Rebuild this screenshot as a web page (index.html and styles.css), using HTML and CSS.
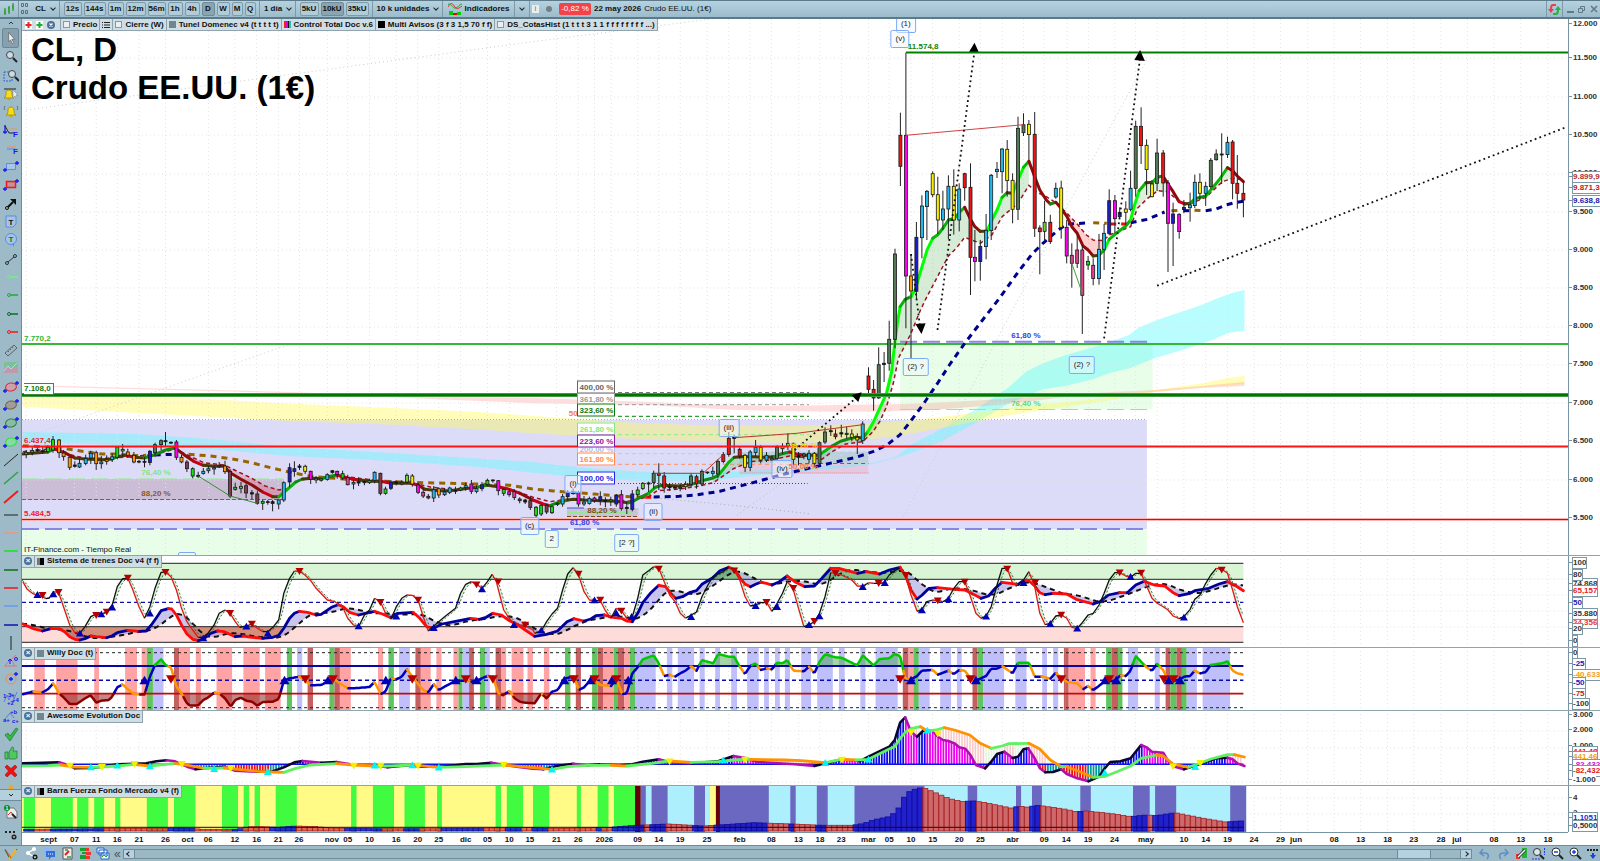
FILE: index.html
```html
<!DOCTYPE html>
<html lang="es">
<head>
<meta charset="utf-8">
<title>CL, D - Crudo EE.UU. (1€)</title>
<link rel="stylesheet" href="styles.css">
</head>
<body>
<div class="app">
  <header class="topbar">
    <span class="cell logo"><svg width="12" height="14" viewBox="0 0 12 14"><path d="M2 6v7M6 4v8M10 1v8" stroke="#1f7a1f" stroke-width="1"/><path d="M1 8h2v4H1zM5 5h2v5H5zM9 3h2v4H9z" fill="#35a835"/></svg></span>
    <span class="cell grip"><svg width="8" height="14" viewBox="0 0 8 14" fill="none" stroke="#5f6f79"><path d="M.5 1.500h2v3h-2zM4.500 1.500h2v3h-2zM.5 8.500h2v3h-2zM4.500 8.500h2v3h-2z"/></svg></span>
    <button class="cell plain symbol">CL <i class="chev"></i></button>
    <div class="cell group frames">
      <button class="w18">12s</button><button class="w22">144s</button><button class="w16">1m</button><button class="w21">12m</button><button class="w18">56m</button><button class="w14">1h</button><button class="w14">4h</button><button class="w13 on">D</button><button class="w13">W</button><button class="w11">M</button><button class="w11">Q</button>
    </div>
    <button class="cell plain day">1 día <i class="chev"></i></button>
    <div class="cell group units"><button class="w20">5kU</button><button class="w24 on">10kU</button><button class="w24">35kU</button></div>
    <button class="cell plain unit-select">10 k unidades <i class="chev"></i></button>
    <button class="cell plain indic"><svg width="14" height="14" viewBox="0 0 14 14" fill="none"><path d="M0 5c3-6 5-3 7 0s4 1 7-1" stroke="#d33"/><path d="M0 2c4 0 5 5 8 4s3-4 6-4" stroke="#2a2"/><path d="M1 9h4v4H1zM9 10h4v3H9z" fill="#00d000"/><path d="M5 11h4v2H5z" fill="#e00"/></svg> Indicadores</button>
    <button class="cell plain more" aria-label="Más indicadores"><i class="chev"></i></button>
    <div class="status"><span class="info">i</span><span class="dot"></span><span class="change">-0,82 %</span><b>22 may 2026</b><span>Crudo EE.UU. (1€)</span></div>
    <button class="cell plain refresh" aria-label="Actualizar"><svg width="13" height="13" viewBox="0 0 13 13" fill="none" stroke-width="2"><path d="M8 2H5C3 2 3 4 3 7" stroke="#e8414d"/><path d="M0 6h6L3 10z" fill="#e8414d"/><path d="M5 11h3c2 0 2-2 2-4" stroke="#25b23d"/><path d="M7 7h6L10 3z" fill="#25b23d"/></svg></button>
    <div class="window-buttons"><svg width="32" height="10" viewBox="0 0 32 10" fill="none" stroke="#627985"><path d="M1 8h7" stroke-width="2"/><path d="M12.500 4.500h4v4h-4zM14.500 4V2.500h4v4H17"/><path d="M25 2l6 6M31 2l-6 6" stroke-width="1.500"/></svg></div>
  </header>
  <nav class="tools" id="tools" aria-label="Herramientas"></nav>
  <main class="charts">
    <section class="panel price">
      <div class="plot"><svg id="price"></svg><div class="labels" id="price-labels"></div>
        <div class="tags">
          <span class="tag icons"><svg width="34" height="10" viewBox="0 0 34 10"><rect x="1" y="1" width="7" height="8" fill="#fff"/><path d="M4.500 2v6M1.500 5h6" stroke="#e22" stroke-width="2"/><rect x="12" y="1" width="7" height="8" fill="#fff"/><path d="M15.500 2v6M12.500 5h6" stroke="#1fae2c" stroke-width="2"/><circle cx="27" cy="5" r="4" fill="#4a7199"/><path d="M25.500 3.500l3 3m0-3l-3 3" stroke="#fff" stroke-width="1.300"/></svg></span>
          <span class="tag"><i class="sw"></i>Precio</span>
          <span class="tag"><svg width="8" height="8" viewBox="0 0 8 8"><path d="M0 1.500h1M2 1.500h6M0 4h1M2 4h6M0 6.500h1M2 6.500h6" stroke="#222"/></svg></span>
          <span class="tag"><i class="sw"></i>Cierre (W)</span>
          <span class="tag"><i class="sw slate"></i>Tunel Domenec v4 (t t t t t)</span>
          <span class="tag tight"><i class="sw rainbow"></i>Control Total Doc v.6</span>
          <span class="tag"><i class="sw black"></i>Multi Avisos (3 f 3 1,5 70 f f)</span>
          <span class="tag"><i class="sw"></i>DS_CotasHist (1 t t t 3 1 1 f f f f f f f f ...)</span>
        </div>
        <h1>CL, D<br>Crudo EE.UU. (1€)</h1>
        <p class="credit">IT-Finance.com - Tiempo Real</p>
      </div>
      <div class="axis" id="price-axis"></div>
    </section>
    <section class="panel trains">
      <div class="plot"><svg id="trains"></svg><div class="head"><button aria-label="Cerrar"></button><h2><i class="sw half"></i>Sistema de trenes Doc v4 (f f)</h2></div></div>
      <div class="axis" id="trains-axis"></div>
    </section>
    <section class="panel willy">
      <div class="plot"><svg id="willy"></svg><div class="head"><button aria-label="Cerrar"></button><h2><i class="sw slate"></i>Willy Doc (t)</h2></div></div>
      <div class="axis" id="willy-axis"></div>
    </section>
    <section class="panel awesome">
      <div class="plot"><svg id="awesome"></svg><div class="head"><button aria-label="Cerrar"></button><h2><i class="sw slate"></i>Awesome Evolution Doc</h2></div></div>
      <div class="axis" id="awesome-axis"></div>
    </section>
    <section class="panel force">
      <div class="plot"><svg id="force"></svg><div class="head"><button aria-label="Cerrar"></button><h2><i class="sw half"></i>Barra Fuerza Fondo Mercado v4 (f)</h2></div></div>
      <div class="axis" id="force-axis"></div>
    </section>
    <div class="time" id="time"></div>
  </main>
  <footer class="bottombar">
    <button class="pencil" aria-label="Dibujar"><svg width="14" height="14" viewBox="0 0 14 14" fill="none"><path d="M1 3l5 9L13 2" stroke="#2a6f32"/><path d="M5 12L12 3" stroke="#f0b429" stroke-width="2.500"/><path d="M1 2l6 9" stroke="#d63a3a"/></svg></button>
    <div class="actions">
      <button aria-label="Compartir"><svg width="13" height="13" viewBox="0 0 13 13"><path d="M9 2L3 6l6 4" fill="none" stroke="#fff" stroke-width="1.500"/><circle cx="3" cy="6" r="2" fill="#fff"/><circle cx="9" cy="2" r="2" fill="#fff"/><circle cx="10" cy="10" r="2.500" fill="#111"/><path d="M8.500 9.500h3L10 11.500z" fill="#fff"/></svg></button>
      <button aria-label="Comentarios"><svg width="13" height="13" viewBox="0 0 13 13"><path d="M1 1h8v6H1z" fill="#8fb4f5"/><path d="M3 4h9v6H8l-2 3v-3H3z" fill="#2f6fdc"/><path d="M5 7h1m1 0h1m1 0h1" stroke="#fff"/></svg></button>
      <button aria-label="Informe"><svg width="13" height="13" viewBox="0 0 13 13"><path d="M2 1h9v11H2z" fill="#eee" stroke="#555"/><path d="M4 8l4-4" stroke="#d22" stroke-width="2" fill="none"/><path d="M4 3h3M6 10h4" stroke="#2a2" stroke-width="1.500"/></svg></button>
      <button aria-label="Libro de órdenes"><svg width="13" height="13" viewBox="0 0 13 13"><path d="M1 1h6v3H1zM1 8h6v4H1zM3 5h4v2H3z" fill="#17a22b"/><path d="M7 1h3v3H7zM7 5h5v3H7zM7 9h4v3H7z" fill="#e33"/></svg></button>
      <button aria-label="Ventanas"><svg width="14" height="13" viewBox="0 0 14 13" fill="#fff" stroke="#2166c7"><path d="M1 1h7v5H1zM3 3h8v5H3zM5 6h8v6H5z"/><path d="M6 10l2-2 2 2 2-2" stroke="#2a2" fill="none"/></svg></button>
      <span class="collapse">«</span>
    </div>
    <div class="scroll"><button aria-label="Anterior"><i class="arrow left"></i></button><span class="track"><span class="thumb"></span></span><button aria-label="Siguiente"><i class="arrow right"></i></button></div>
    <div class="actions right">
      <button aria-label="Deshacer"><svg width="12" height="12" viewBox="0 0 12 12"><path d="M4 1L1 5l4 3M1 5h5c4 0 4 4 2 6" fill="none" stroke="#5e8fc4" stroke-width="1.500"/></svg></button>
      <button aria-label="Rehacer"><svg width="12" height="12" viewBox="0 0 12 12"><path d="M8 1l3 4-4 3M11 5H6c-4 0-4 4-2 6" fill="none" stroke="#5e8fc4" stroke-width="1.500"/></svg></button>
      <button aria-label="Configurar"><svg width="13" height="13" viewBox="0 0 13 13"><path d="M1 7h4v5H1z" fill="#e33"/><path d="M7 1h5v10H7z" fill="#27b23a"/><path d="M3 10l7-7" stroke="#222" stroke-width="3"/><path d="M3 10l7-7" stroke="#fff" stroke-width="1.500"/></svg></button>
      <button aria-label="Ajustar"><svg width="14" height="13" viewBox="0 0 14 13" fill="none"><circle cx="5" cy="5" r="3.500" fill="#dde8ee" stroke="#333"/><path d="M8 8l4 4" stroke="#222" stroke-width="2"/><path d="M12.500 1v7M0 12h8" stroke="#1c3fe0" stroke-dasharray="2 1"/></svg></button>
      <button aria-label="Alejar"><svg width="13" height="13" viewBox="0 0 13 13" fill="none"><circle cx="5" cy="5" r="4" fill="#fff" stroke="#333"/><path d="M8 8l4 4" stroke="#222" stroke-width="2"/><path d="M3 5h4" stroke="#1c3fe0" stroke-width="1.500"/></svg></button>
      <button aria-label="Acercar"><svg width="13" height="13" viewBox="0 0 13 13" fill="none"><circle cx="5" cy="5" r="4" fill="#fff" stroke="#333"/><path d="M8 8l4 4" stroke="#222" stroke-width="2"/><path d="M3 5h4M5 3v4" stroke="#1c3fe0" stroke-width="1.500"/></svg></button>
      <button aria-label="Ir al final"><svg width="12" height="12" viewBox="0 0 12 12"><path d="M0 2h12" stroke="#222" stroke-width="2" stroke-dasharray="2 1"/><path d="M6 5v3" stroke="#1c3fe0" stroke-width="2"/><path d="M3 7h6l-3 4z" fill="#1c3fe0"/></svg></button>
    </div>
  </footer>
</div>
<script src="chart.js"></script>
</body>
</html>
```

FILE: styles.css
```css
* { box-sizing: border-box; }
body { margin: 0; font: 8px/10px "Liberation Sans", Arial, sans-serif; color: #111; background: #9cbac8; }
button { margin: 0; padding: 0; border: 0; background: none; font: inherit; color: inherit; }
svg { display: block; }

.app { display: grid; grid-template: 19px minmax(0, 1fr) 16px / 22px minmax(0, 1fr); height: 100vh; min-height: 480px; overflow: hidden; }

/* top bar */
.topbar { grid-column: 1 / 3; display: flex; align-items: stretch; font-weight: bold; background: linear-gradient(#b4d2e0, #9dbccb); border-top: 1px solid #5d7a8a; border-bottom: 2px solid #5d7a8a; white-space: nowrap; }
.cell { display: flex; align-items: center; justify-content: center; border-right: 1px solid #7d98a6; }
.logo { width: 19px; }
.grip { width: 12px; border-right: 0; }
.symbol { width: 29px; gap: 5px; }
.group { gap: 2px; }
.frames { width: 200px; }
.group button { height: 14px; border: 1px solid #7f9aa8; border-radius: 2px; background: #b1ccd9; line-height: 10px; }
.group button.on { background: #8aa5b2; border-color: #6f8a98; }
.w11 { width: 11px; } .w13 { width: 13px; } .w14 { width: 15px; } .w16 { width: 16px; }
.w18 { width: 18px; } .w20 { width: 19px; } .w21 { width: 20px; } .w22 { width: 22px; } .w24 { width: 23px; }
.day { width: 36px; gap: 5px; }
.units { width: 77px; }
.unit-select { width: 70px; gap: 5px; }
.indic { width: 72px; gap: 3px; }
.more { width: 15px; }
.chev { width: 4px; height: 4px; border: solid #222; border-width: 0 1px 1px 0; transform: translateY(-1px) rotate(45deg); }
.status { display: flex; align-items: center; gap: 3px; flex: 1; padding-left: 2px; font-weight: normal; }
.status .info { width: 7px; background: #e8eef1; text-align: center; color: #777; line-height: 8px; }
.dot { width: 6px; height: 6px; margin: 0 4px; border-radius: 50%; background: #777f83; }
.change { width: 32px; line-height: 12px; text-align: center; color: #fff; background: #f3424a; border-radius: 2px; }
.refresh { width: 17px; border-left: 1px solid #7d98a6; }
.window-buttons { display: flex; align-items: center; padding: 0 2px 0 3px; }

/* drawing tools */
.tools { display: flex; flex-direction: column; background: #9cbac8; border-right: 1px solid #6f8c9b; min-height: 0; }
.tools button { display: flex; align-items: center; justify-content: center; flex: 184 1 0; min-height: 0; overflow: hidden; }
.tools button.small { flex: 90 1 0; }
.tools button.fold { flex: 95 1 0; border-top: 1px solid #6f8c9b; border-bottom: 1px solid #6f8c9b; background: #b4d0dc; }
.tools button.tall { flex: 225 1 0; }
.tools button.active { background: #86a0ad; border: 1px solid #6e8794; border-radius: 2px; margin: 0 2px; }

/* chart panels */
.charts { display: flex; flex-direction: column; min-width: 0; min-height: 0; background: #fff; }
.panel { position: relative; display: grid; grid-template-columns: minmax(0, 1fr) 32px; min-height: 0; overflow: hidden; }
.price { flex: 536 1 0; } .trains { flex: 92 1 0; } .willy { flex: 63 1 0; } .awesome { flex: 75 1 0; } .force { flex: 47 1 0; }
.panel + .panel::before { content: ""; position: absolute; z-index: 1; inset: 0 0 auto; height: 1px; background: #8fa4ae; }
.plot { position: relative; overflow: hidden; min-height: 0; }
.plot > svg { position: absolute; width: 100%; height: 100%; }
.axis { position: relative; border-left: 1px solid #7893a1; overflow: hidden; }
.axis span { position: absolute; left: 4px; transform: translateY(-50%); font-size: 8px; line-height: 10px; font-weight: bold; white-space: nowrap; color: #333; background: #fff; }
.axis span::before { content: ""; position: absolute; left: -4px; top: 4px; width: 3px; height: 1px; background: #7893a1; }
.axis span.box { outline: 1px solid #7c97a5; }
.labels { position: absolute; inset: 0; }
.labels span { position: absolute; transform: translate(-50%, -50%); white-space: nowrap; font-size: 8px; line-height: 10px; }
.labels .wave { padding: 3px 4px; min-width: 13px; min-height: 18px; border: 1px solid #7fa9f5; border-radius: 2px; background: rgba(240, 245, 255, .5); color: #222; }
.labels .fib { width: 38px; border: 1px solid; background: #fff; line-height: 11px; text-align: center; font-weight: bold; }
.labels .pct { font-weight: bold; }
.labels .lvl { transform: translate(0, -50%); font-weight: bold; }
.labels .lvl.framed { border: 1px solid #3a8a3a; border-left: 0; background: #fff; padding: 0 2px 0 0; }
h1 { position: absolute; left: 9px; top: 12px; margin: 0; font-size: 33px; line-height: 38px; color: #000; }
.credit { position: absolute; left: 2px; bottom: 0; margin: 0; }
.tags { position: absolute; left: 0; top: 0; display: flex; height: 12px; border-bottom: 1px solid #8fa4ae; background: #cfdde5; font-weight: bold; white-space: nowrap; }
.tag { display: flex; align-items: center; gap: 3px; padding: 0 2px; border-right: 1px solid #8fa4ae; }
.sw { width: 7px; height: 7px; border: 1px solid #8b979e; background: #e9eff2; }
.sw.slate { background: #708792; border: 0; }
.sw.black { background: #000; border: 0; }
.sw.half { border: 0; background: linear-gradient(90deg, #777 40%, #000 40%); }
.sw.rainbow { border: 0; background: linear-gradient(90deg, #e22 30%, #d0d 30% 50%, #111 50% 70%, #2bb 70%); }
.head { position: absolute; left: 0; top: 0; display: flex; height: 13px; background: #cfdde5; border: solid #8fa4ae; border-width: 0 1px 1px 0; }
.head button { position: relative; width: 13px; border-right: 1px solid #8fa4ae; }
.head button::before { content: "×"; position: absolute; left: 2px; top: 2px; width: 8px; height: 8px; border-radius: 50%; background: #4a7199; color: #fff; font-weight: bold; line-height: 8px; text-align: center; }
.head h2 { display: flex; align-items: center; gap: 3px; margin: 0; padding: 0 2px; font-size: 8px; line-height: 10px; white-space: nowrap; }
.time { position: relative; flex: none; height: 13px; margin-right: 32px; border-top: 1px solid #7893a1; font-weight: bold; }
.time span { position: absolute; top: 2px; transform: translateX(-50%); }

/* bottom bar */
.bottombar { grid-column: 1 / 3; display: flex; align-items: center; background: #9cbac8; border-top: 1px solid #6f8c9b; }
.pencil { display: flex; width: 22px; justify-content: center; }
.actions { display: flex; align-items: center; gap: 4px; padding-left: 2px; }
.actions button { display: grid; place-items: center; width: 14px; height: 14px; }
.actions.right { padding: 0 0 0 6px; }
.collapse { font-size: 12px; color: #43545d; width: 9px; }
.scroll { display: flex; flex: 1; height: 10px; background: #9cb8c5; border: 1px solid #6f8c9b; }
.scroll button { width: 10px; display: grid; place-items: center; background: #b7d2de; }
.track { display: flex; flex: 1; justify-content: flex-end; padding-right: 29px; border: solid #6f8c9b; border-width: 0 1px; }
.thumb { width: 34px; background: #b4d2df; border: solid #6f8c9b; border-width: 0 1px; }
.arrow { width: 4px; height: 4px; border: solid #222; }
.arrow.left { border-width: 0 0 1px 1px; transform: rotate(45deg); }
.arrow.right { border-width: 1px 1px 0 0; transform: rotate(45deg); }
```

FILE: chart.js
```js
// Series are stored in blocks: a letter for the column block and a vertical
// origin ("B300"), followed by x,y pairs in one-third steps.
const COLS = { A: 0, B: 533, C: 1066 };
const KX = 2.942, KY = 3;

function pts(text) {
  let ox = 0, oy = 0;
  const out = [];
  for (const t of text.trim().split(/\s+/)) {
    if (/^[ABC]\d+$/.test(t)) { ox = COLS[t[0]]; oy = +t.slice(1); continue; }
    const p = t.split(',');
    out.push([ox + p[0] / KX, oy + p[1] / KY, ...p.slice(2).map(v => isNaN(v) ? v : oy + v / KY)]);
  }
  return out;
}
const f = n => Math.round(n * 10) / 10;
const d = (ps, close) => 'M' + ps.map(p => f(p[0]) + ' ' + f(p[1])).join('L') + (close ? 'Z' : '');
const path = (ps, stroke, w = 1, extra = '') => `<path d="${d(ps)}" fill="none" stroke="${stroke}" stroke-width="${w}" ${extra}/>`;
const area = (ps, fill) => `<path d="${d(ps, true)}" fill="${fill}"/>`;
const rect = (x0, y0, x1, y1, fill, extra = '') => `<rect x="${f(x0)}" y="${f(y0)}" width="${f(x1 - x0)}" height="${f(y1 - y0)}" fill="${fill}" ${extra}/>`;
const hline = (x0, x1, y, c, w = 1, dash = '') => `<path d="M${f(x0)} ${f(y)}H${f(x1)}" stroke="${c}" stroke-width="${w}" stroke-dasharray="${dash}" fill="none"/>`;
const band = (up, lo, fill) => area([...pts(up), ...pts(lo).reverse()], fill);
const tri = (x, y, s, down, c) => `<path d="M${f(x - s)} ${f(y + (down ? -s : s) * .8)}h${2 * s}l${-s} ${down ? 1.7 * s : -1.7 * s}z" fill="${c}"/>`;
const tris = (text, s, down, c) => pts(text).map(p => tri(p[0], p[1], s, down, c)).join('');
function runs(ps, color, w, extra = '') {
  let s = '', from = 0;
  for (let i = 1; i < ps.length; i++) {
    const c = color(ps[i - 1], ps[i]);
    if (i === ps.length - 1 || color(ps[i], ps[i + 1]) !== c) {
      s += path(ps.slice(from, i + 1), c, w, 'stroke-linejoin="round" ' + extra);
      from = i;
    }
  }
  return s;
}
function valueAt(ps, x) {
  for (let i = 1; i < ps.length; i++) if (ps[i][0] >= x) {
    const a = ps[i - 1], b = ps[i];
    return a[1] + (b[1] - a[1]) * (x - a[0]) / (b[0] - a[0] || 1);
  }
  return ps[ps.length - 1][1];
}
const clip = (ps, a, b) => ps.filter(p => p[0] >= a && p[0] <= b);
const between = (u, l, a, b, fill) => area([...clip(u, a, b), ...clip(l, a, b).reverse()], fill);
const A = x => x / KX, B = x => 533 + x / KX, C = x => 1066 + x / KX;
const END = C(522);

const GRID = [77,219,283,345,409,487,613,691,755,819,881,963,1023,1087,1166,1229,1291,1355,1434,1498].map(A)
  .concat([69,133,181,230,308,370,433,512,576,638,701,782,844,907,987,1048,1112,1176,1254,1316,1381,1443,1504].map(B))
  .concat([3,66,144,205,268,347,411,475,553,631,711,789,867,946,1023,1103,1181,1259,1338,1418].map(C));
const grid = (y0, y1, rows) => GRID.map(x => `<path d="M${f(x)} ${y0}V${y1}" stroke="#e3e3e3" stroke-dasharray="1 3"/>`).join('')
  + rows.map(y => hline(22, 1568, y, '#e3e3e3', 1, '1 3')).join('');

function mount(id, top, bottom, body) {
  const svg = document.getElementById(id);
  svg.setAttribute('viewBox', `22 ${top} 1546 ${bottom - top}`);
  svg.setAttribute('preserveAspectRatio', 'none');
  svg.innerHTML = body;
}
function axis(id, top, bottom, rows) {
  document.getElementById(id + '-axis').innerHTML = rows.map(([y, t, c, box]) =>
    `<span class="${box ? 'box' : ''}" style="top:${(100 * (y - top) / (bottom - top)).toFixed(2)}%;color:${c || '#333'}">${t}</span>`).join('');
}

/* ---------- price ---------- */
const FILL = { c: '#22b8ee', o: '#ff9800', g: '#16e016', d: '#527a54', m: '#ff00f0', b: '#1c1cc8', y: '#f6ee00', r: '#f01414', w: '#7d3d4d', l: '#6ccf3c', p: '#e0418f', k: '#111' };
const candles = pts(`A300
77,450,457,463,475,c 95,442,452,458,466,g 110,444,449,453,456,k 126,440,452,455,461,k 141,436,442,455,460,g 156,408,419,450,458,g 174,417,420,458,474,o 187,450,459,470,482,o 205,470,472,502,510,o 220,484,495,499,503,k 234,476,490,501,504,c 252,464,476,490,496,c 267,452,460,474,492,c 283,452,458,491,510,o 298,468,486,491,506,c 314,466,479,484,494,o 330,460,470,478,486,c 345,438,441,472,478,g 361,432,448,453,470,l 376,446,456,466,474,o 394,456,466,486,490,o 409,480,484,486,490,k 425,472,484,487,502,k 441,450,454,488,496,b 456,428,434,458,470,d 474,418,422,434,450,d 487,396,422,425,440,k 503,424,427,429,432,k 519,420,426,472,480,m 534,464,472,486,490,o 550,480,486,506,516,w 567,502,506,528,535,g 583,515,526,530,534,k 598,504,514,521,524,c 613,498,506,512,520,c 630,498,503,507,524,c 645,486,497,500,504,c 662,482,498,515,522,o 677,508,514,588,594,w 692,548,562,568,572,g 709,546,559,565,580,l 724,550,557,579,594,w 741,570,578,582,598,k 757,572,582,610,614,w 773,600,604,610,630,g 788,600,605,607,614,k 802,600,605,610,634,k 820,598,600,612,628,c 835,544,548,600,606,c 852,490,503,546,562,b 866,484,506,514,530,b 881,492,498,502,510,k 898,494,499,514,522,y 914,512,514,538,552,m 930,528,535,540,550,g 945,534,537,541,545,l 963,520,524,538,542,c 978,510,512,517,521,k 992,512,514,524,536,m 1008,512,521,534,540,g 1023,524,533,554,556,p 1040,540,547,552,568,c 1055,532,545,549,558,k 1072,540,545,548,556,k 1087,536,542,548,552,g 1102,514,517,542,550,c 1119,518,520,580,586,w 1134,560,567,580,584,g 1150,540,546,565,570,b 1166,542,546,550,556,k 1182,540,548,552,556,g 1197,520,526,546,552,l 1213,522,528,552,560,y 1230,548,555,577,582,m 1245,564,577,588,594,p 1260,582,589,594,598,r 1276,558,569,594,606,c 1291,562,566,585,594,o 1308,564,576,584,588,c 1323,560,564,577,582,c 1340,560,571,574,582,b 1355,560,564,570,574,g 1370,548,557,562,572,c 1387,540,552,574,582,m 1402,556,566,574,580,c 1418,546,554,566,574,b 1434,536,541,553,558,g 1450,538,540,542,548,k 1466,540,542,572,586,m 1482,564,568,580,588,g 1498,566,575,584,590,m 1513,568,575,592,600,p 1529,592,597,602,610,w 1545,596,600,606,612,k 1560,590,602,622,630,w
B300 9,618,622,646,652,g 24,612,616,642,648,g 40,612,616,636,642,w 56,616,620,638,642,g 72,606,610,614,618,g 87,582,590,612,620,c 102,570,576,590,600,b 118,565,578,580,584,k 134,572,577,612,620,m 150,588,606,612,618,c 166,590,596,610,614,c 181,590,594,602,608,m 198,574,590,602,616,b 213,592,600,604,622,k 229,590,599,603,618,g 245,582,586,612,620,b 260,570,584,625,632,m 276,605,622,626,642,k 292,570,582,628,634,b 308,560,570,584,590,g 323,546,550,566,570,l 340,545,549,552,576,k 355,512,520,548,566,d 370,490,520,526,570,r 386,516,528,564,578,r 402,550,560,563,572,k 418,556,562,564,570,k 433,550,562,566,574,d 449,544,554,560,570,y 465,520,528,553,560,d 481,524,530,552,566,r 497,508,514,552,558,d 513,515,516,518,522,k 529,500,514,520,530,c 544,478,484,522,535,d 560,456,464,484,490,r 576,396,415,464,470,r 592,404,412,416,460,k 608,442,448,468,476,r 624,462,466,502,516,y 639,450,456,502,514,c 655,420,442,458,470,c 670,436,442,480,490,y 687,456,466,480,486,c 703,466,476,480,484,g 718,436,442,476,482,d 734,430,440,446,462,y 750,400,430,440,450,l 766,428,430,478,494,y 781,456,466,472,496,k 797,458,462,468,478,d 812,450,460,478,490,c 828,456,460,490,502,y 843,424,428,490,496,d 859,382,396,426,432,d 876,376,392,395,408,k 890,388,402,410,418,r 907,374,398,402,412,k 923,380,400,404,416,g 938,388,402,412,424,y 954,400,412,420,462,y 970,364,372,422,432,c 987,202,228,268,280,r 1002,240,268,294,332,r 1017,142,194,294,296,d 1033,156,190,194,246,k 1048,62,118,190,212,d
B0 1065,746,762,1018,1045,d 1081,338,406,499,558,r 1097,158,406,828,985,m 1112,762,828,873,1075,o 1128,666,712,874,900,b 1144,586,618,713,775,c 1159,570,574,620,720,c 1176,514,521,584,592,y 1191,530,584,660,702,y 1206,572,627,660,690,c 1222,526,559,627,718,c 1238,508,559,660,704,y 1254,550,567,660,694,c 1270,518,521,563,602,r 1287,490,562,772,885,r 1300,690,772,785,844,m 1316,720,739,785,842,b 1333,642,691,740,778,c 1348,522,526,692,720,c 1365,486,508,515,534,c 1380,445,447,515,580,c 1395,420,448,542,590,y 1411,520,541,628,670,y 1427,350,385,628,660,d 1443,340,374,398,408,d 1459,360,373,404,480,y 1476,336,403,685,711,r 1491,676,684,695,823,r 1505,602,667,694,720,l 1522,644,667,725,732,r 1538,548,565,591,596,c 1554,542,564,682,716,y 1570,660,682,768,790,m
C0 17,730,766,790,863,p 33,706,750,790,804,p 48,735,750,886,1002,p 65,768,784,795,810,g 80,775,796,836,856,p 97,702,748,836,854,c 112,672,700,748,810,c 127,568,602,700,706,b 144,585,602,656,700,m 158,622,637,650,656,b 176,604,627,637,676,y 190,512,565,628,634,c 205,362,379,565,590,d 221,322,379,437,492,r 237,418,436,509,585,y 253,540,552,590,592,y 268,416,459,550,573,d 286,450,459,549,590,r 300,540,549,670,816,m 315,608,642,670,798,b 333,640,643,695,716,m 347,600,622,629,640,b 365,578,615,623,665,c 379,524,547,617,624,c 394,520,547,580,600,y 411,545,559,580,618,c 426,474,481,560,566,d 442,448,462,479,482,d 458,400,462,465,552,k 475,410,427,464,474,c 490,420,426,550,598,r 504,465,550,580,626,r 522,545,580,600,652,r`);

const ma = pts(`A300 67,462 95,460 141,456 160,447 190,458 205,466 220,474 250,477 300,479 330,477 345,470 372,466 394,472 425,474 450,466 487,450 515,444 530,455 550,470 570,484 598,496 630,499 660,499 677,518 709,538 741,555 773,576 802,590 820,590 835,578 852,562 870,546 890,537 920,535 945,536 965,530 990,525 1023,534 1055,540 1087,544 1119,544 1150,550 1180,549 1210,550 1230,556 1250,568 1290,572 1323,572 1355,568 1402,562 1434,556 1466,560 1498,568 1530,580 1568,600
B300 30,612 50,617 72,608 102,600 120,598 150,600 200,602 245,604 280,608 292,605 308,596 340,580 360,562 380,556 430,558 465,554 497,542 530,534 545,526 560,508 575,488 592,472 615,470 650,470 680,472 710,470 730,462 755,456 775,462 800,466 840,466 860,452 880,438 905,424 930,416 950,412 970,414 985,395 1002,365 1020,325 1040,280 1055,215 1064,130 1072,70 1080,20 1095,-2
B0 1112,890 1125,868 1140,815 1160,748 1176,715 1191,704 1206,685 1222,660 1240,655 1255,637 1270,622 1287,658 1300,680 1316,694 1335,694 1350,660 1365,630 1380,592 1395,578 1411,580 1427,540 1443,502 1459,484 1476,530 1491,570 1510,600 1522,612 1538,607 1554,625
C0 3,650 17,680 33,700 50,738 65,750 80,768 97,766 112,750 127,718 150,698 176,678 190,660 200,620 215,572 235,548 255,547 268,532 285,528 300,552 315,575 333,605 350,612 365,610 379,596 411,588 430,565 450,540 475,503 490,512 504,528 522,545`);
const signal = pts(`A300 67,455 160,446 200,462 250,475 330,475 394,468 450,465 515,447 545,462 600,488 660,495 700,515 741,535 780,558 820,570 850,565 881,540 1000,528 1119,543 1210,548 1270,562 1340,570 1434,557 1500,567
B300 0,592 50,605 100,598 200,600 280,604 340,590 365,572 420,568 480,560 530,548 560,528 590,506 640,485 700,480 755,468 800,472 850,478 880,455 920,432 970,425 1000,395 1020,365 1040,320 1060,250 1075,175 1100,125 1112,100 1140,30
B0 1155,898 1190,830 1222,768 1245,745 1270,712 1316,730 1350,705 1380,650 1427,610 1459,556 1480,575 1510,590 1538,608
C0 3,640 33,672 60,705 80,720 110,722 127,705 190,680 210,625 240,595 270,572 300,575 333,605 365,612 411,592 460,545 490,535 522,540`);

const maColor = (a, b) => {
  const s = (b[1] - a[1]) / (b[0] - a[0] || 1);
  return s < -1.600 ? '#00ff00' : s < -.6 ? '#0ab50a' : s < -.15 ? '#128a12' : s < .15 ? '#4a3a08' : s < .5 ? '#c80018' : '#8f0a0a';
};
const THICK = 'stroke-dasharray="6 5"';
const slow = [
  ['#966400', 'A300 67,437 120,440 200,447 250,455 300,462 340,462 394,467 430,466'],
  ['#00008c', 'A300 455,465 515,463'],
  ['#966400', 'A300 555,463 620,468 680,476 740,488 800,504 860,518 920,530 1000,536 1100,543 1250,548 1400,552 1500,556 B300 0,567 60,573 180,582 260,589 325,592'],
  ['#ff1010', 'B300 330,592 355,592'],
  ['#00008c', 'B300 355,591 430,589 480,585 550,574 640,550 740,522 840,498 950,472 1000,455 1040,436 1080,404 1112,362 1150,310 1190,250 1225,195 1270,130 1330,50 1370,-2 B0 1430,812 1470,760 1500,730 1545,690 C0 3,672 60,669'],
  ['#966400', 'C0 80,668 120,670'], ['#e01010', 'C0 130,672 180,672'],
  ['#00008c', 'C0 190,668 240,658 290,636'], ['#966400', 'C0 310,632 340,631'], ['#00008c', 'C0 345,632 370,632'],
  ['#966400', 'C0 378,631 405,632'], ['#00008c', 'C0 411,632 440,628 470,615 495,608 522,604'],
];
const cloud = band('A300 67,396 400,402 540,412 650,420 830,440 1100,456 B300 0,486 70,495 200,508 350,517 530,518 700,508 900,496 1000,488 1070,470 1110,435 1200,388 1300,330 1400,262 1450,215 1500,190 C300 0,165 60,148 120,130 185,105 215,82 268,60 340,35 400,14 440,-3 490,-22 525,-30',
    'A300 67,425 450,438 650,450 850,468 1100,480 1400,500 B300 0,518 150,534 350,545 530,540 700,522 900,505 1000,492 1070,473 1130,452 1200,425 1300,370 1400,310 1500,268 C300 0,257 80,238 130,218 190,204 260,175 350,148 420,124 480,98 525,92', 'rgba(90,250,255,.42)')
  + band('A300 67,290 400,292 600,296 830,310 1100,322 1400,335 B300 0,348 300,368 500,376 750,378 950,372 1100,362 1250,345 1400,325 C300 0,306 120,295 260,270 400,250 480,233 525,227',
    'A300 67,320 300,333 830,362 1100,372 1400,388 B300 0,400 300,418 600,428 800,428 950,422 1060,410 1200,385 1350,355 1500,330 C300 0,320 110,304 260,275 400,262 525,252', 'rgba(255,250,80,.4)')
  + band('A300 160,257 400,264 650,270 850,276 1200,289 B300 0,294 350,306 500,314 700,318 900,315 1100,312 1300,302 C300 0,284 140,276 260,270 400,258 525,246',
    'A300 160,261 400,268 650,274 850,280 1200,294 B300 0,310 350,316 600,330 900,335 1050,334 1200,328 1400,312 C300 0,290 260,276 400,264 525,258', 'rgba(255,120,120,.25)');

const FIB = [[278, '#555'], [314, '#999'], [349, '#080'], [404, '#8e8'], [461, '#b9c9f0'], [493, '#ff9060']];
let price = rect(22, 420, C(238), 529.3, '#dddcf8') + rect(22, 529.3, C(238), 555, '#e8fee8')
  + rect(B(1080), 345, C(255), 409.300, '#e8fee8') + rect(22, 479, A(835), 500, 'rgba(180,150,170,.45)')
  + rect(B(100), 508, B(310), 517, 'rgba(160,150,150,.35)') + rect(B(608), 452, B(987), 463, 'rgba(130,190,170,.35)') + rect(B(608), 463, B(987), 473.300, 'rgba(240,160,180,.35)')
  + cloud + grid(19, 555, [58, 97, 135, 174, 212, 250, 288, 327, 365, 403, 442, 480, 519])
  + path(pts('A0 77,330 1568,125 B0 540,55'), '#ccc', 1, 'stroke-dasharray="1 3"')
  + path(pts('A300 67,415 860,130'), '#ccc', 1, 'stroke-dasharray="1 3"')
  + path(pts('B300 1090,650 C0 3,620 240,175'), '#ccc', 1, 'stroke-dasharray="1 3"')
  + path(pts('B300 340,592 600,617 812,641'), '#aaa', 1, 'stroke-dasharray="1 3"')
  + path(pts('B300 600,645 800,500 860,470'), '#bbb', 1, 'stroke-dasharray="1 3"')
  + hline(22, C(238), 419.5, '#e89070', 1, '1 2') + hline(22, C(238), 529, '#8b85e6', 2, '17 6')
  + hline(B(1080), C(250), 341.700, '#8b85e6', 2, '17 6') + hline(B(1080), C(250), 409.500, '#8df08d', 1, '17 6')
  + hline(22, A(835), 479, '#90ee90', 1, '17 6') + hline(22, A(835), 499.500, '#8a5a3a', 1, '4 2')
  + hline(B(100), B(150), 508, '#4848e8') + hline(B(100), B(290), 512.500, '#90e890') + hline(B(100), B(310), 516.500, '#7a4a1a', 1, '4 2')
  + FIB.map(([y, c]) => hline(B(250), B(812), 300 + y / 3, c, 1, '4 3')).join('') + hline(B(250), B(808), 483.500, '#33e', 1, '1 2')
  + hline(B(700), B(987), 451.500, '#ee0', 1, '4 3') + hline(B(780), B(987), 463.500, '#3a8a3a', 1, '4 3') + hline(B(608), B(987), 473, '#e88', 1, '1 1')
  + hline(22, 1568, 344, '#35b835', 2)
  + between(ma, signal, A(530), A(850), 'rgba(230,60,80,.25)') + between(ma, signal, B(530), B(1459), 'rgba(90,180,90,.25)')
  + between(ma, signal, C(3), C(112), 'rgba(255,60,60,.25)') + between(ma, signal, C(190), C(300), 'rgba(90,180,90,.22)') + between(ma, signal, C(400), C(490), 'rgba(90,180,90,.22)')
  + slow.map(([c, t]) => path(pts(t), c, 3, THICK)).join('')
  + path(signal, '#a01020', 1.500, 'stroke-dasharray="4 3"') + runs(ma, maColor, 3, 'stroke-linecap="round"')
  + candles.map(([x, hi, top, bot, lo, c]) => `<path d="M${f(x)} ${f(hi)}V${f(lo)}" stroke="#222"/>` + rect(x - 1.500, top, x + 1.500, Math.max(bot, top + .8), FILL[c], 'stroke="#181818" stroke-width=".8"')).join('')
  + path(pts('B0 1097,406 1443,374'), '#c44') + path(pts('B300 355,520 500,520 560,464'), '#b33') + path(pts('B300 592,413 776,400 970,374'), '#b33')
  + path(pts('A300 583,528 677,588 757,610'), '#3a8a3a') + path(pts('C0 17,790 48,880'), '#3aa03a')
  + hline(22, 1568, 446.500, '#ff1414', 1.800) + hline(22, 1568, 519.500, '#ffb0b0', 3) + hline(22, 1568, 519.500, '#f00000', 1.200)
  + hline(22, 1568, 395, '#5aa85a', 4) + hline(22, 1568, 395, '#007500', 2.500) + hline(B(1097), 1568, 52.500, '#008000', 2)
  + ['B0 1190,990 1298,160', 'C0 112,1015 217,180', 'B0 1112,762 1138,975', 'B300 770,450 955,290', 'C0 268,857 1475,380'].map(t => path(pts(t), '#111', 1.800, 'stroke-dasharray="1.800 3.200"')).join('')
  + area(pts('B0 1299,128 1283,155 1311,155'), '#000') + area(pts('C0 218,150 201,180 232,183'), '#000')
  + area(pts('B300 1125,72 1155,70 1143,102'), '#000') + area(pts('B300 967,277 937,286 957,306'), '#000');
mount('price', 19, 555, price);

const px = x => (100 * (x - 22) / 1546).toFixed(2), py = y => (100 * (y - 19) / 536).toFixed(2);
const label = (cls, t, x, y, c) => `<span class="${cls}" style="left:${px(x)}%;top:${py(y)}%${c ? ';color:' + c : ''}">${t}</span>`;
document.getElementById('price-labels').innerHTML = [
  label('pct', '50', B(118), 414, '#f08050'),
  label('fib', '361,80 %', B(187), 399, '#999'), label('fib', '400,00 %', B(187), 387, '#666'),
  label('fib', '323,60 %', B(187), 410.500, '#0a7a0a'), label('fib', '261,80 %', B(187), 429, '#7ee87e'),
  label('fib', '200,00 %', B(187), 449, '#a9bdf0'), label('fib', '223,60 %', B(187), 440.500, '#8418a8'),
  label('fib', '161,80 %', B(187), 459, '#ff8850'), label('fib', '100,00 %', B(187), 478, '#2222e8'),
  label('wave', '(1)', B(1097), 24), label('wave', '(v)', B(1080), 39.500), label('wave', '(2) ?', B(1126), 367), label('wave', '(2) ?', C(47), 365),
  label('wave', '(iii)', B(576), 428), label('wave', '(iv)', B(733), 469), label('wave', '(i)', B(118), 484), label('wave', '(ii)', B(354), 512),
  label('wave', '2', B(55), 539), label('wave', '[2 ?]', B(276), 543.500), label('wave', '(c)', A(1558), 526), label('wave', '&emsp;', A(551), 561),
  label('pct', '61,80 %', B(1450), 336, '#3c3ce0'), label('pct', '76,40 %', B(1450), 404, '#63dd63'), label('pct', '61,80 %', B(152), 523, '#3c3ce0'),
  label('pct', '88,20 %', B(203), 511, '#7a4a1a'), label('pct', '76,40 %', A(459), 473.500, '#7de87d'), label('pct', '88,20 %', A(459), 494, '#8a5a2a'),
  label('pct', '38,20 %', B(795), 446, '#e8e000'), label('pct', '50,00 %', B(795), 467, '#f08050'),
  label('lvl', '11.574,8', B(1103), 47, '#0a8a0a'), label('lvl', '7.770,2', 24, 338.500, '#2fb52f'), label('lvl framed', '7.108,0', 24, 388.500, '#0a7a0a'),
  label('lvl', '6.437,4', 24, 441, '#f01c2c'), label('lvl', '5.484,5', 24, 514, '#f01c2c'),
].join('');
axis('price', 19, 555, [[24, '12.000'], [58, '11.500'], [97, '11.000'], [135, '10.500'], [173, '10.000'], [212, '9.500'], [250, '9.000'], [288, '8.500'], [326, '8.000'], [364, '7.500'], [403, '7.000'], [441, '6.500'], [480, '6.000'], [518, '5.500'], [177.500, '9.899,9', '#b03030', 1], [187.500, '9.871,3', '#c02020', 1], [201, '9.638,8', '#2020a8', 1]]);

/* ---------- trains ---------- */
const fast = pts(`A550 67,95 80,118 95,130 110,136 125,140 135,146 145,144 157,125 172,127 185,165 205,225 220,248 235,250 250,230 267,200 283,192 298,192 314,186 330,165 345,110 361,86 376,85 390,118 409,170 425,205 441,170 456,115 474,67 487,66 503,80 519,120 534,175 550,215 567,240 583,262 598,262 613,248 630,225 645,190 662,180 677,190 692,215 705,232 725,228 741,222 757,235 773,245 788,245 803,232 820,210 835,130 852,85 866,63 881,64 898,76 914,92 930,115 963,150 985,155 1008,172 1023,205 1040,225 1055,230 1072,195 1087,180 1102,145 1119,155 1134,190 1150,207 1166,170 1182,145 1197,135 1213,136 1230,150 1245,200 1260,243 1276,228 1291,215 1308,200 1323,188 1340,175 1355,130 1370,103 1387,95 1402,103 1418,115 1434,95 1448,73 1460,95 1482,180 1498,205 1513,222 1529,225 1545,228 1568,240
B550 5,250 24,243 40,215 56,192 72,175 87,120 102,72 118,53 134,75 150,125 166,150 181,152 198,152 213,182 229,205 245,175 260,182 276,205 290,208 308,145 323,75 340,62 355,50 370,55 386,95 402,135 418,155 433,190 449,205 465,195 481,186 497,140 513,108 529,80 545,72 560,65 576,50 590,58 608,90 624,140 639,168 655,165 670,158 687,157 703,184 718,160 734,130 748,95 765,115 781,175 797,230 812,224 828,215 843,190 859,140 876,68 890,70 907,75 923,82 940,92 954,108 970,109 987,98 1002,100 1020,100 1033,98 1048,75 1064,62 1080,54 1095,75 1112,135 1130,184 1144,178 1159,155 1176,150 1191,152 1206,155 1222,145 1238,115 1254,95 1270,95 1287,140 1303,190 1318,205 1333,198 1348,170 1365,105 1380,55 1395,55 1411,100 1427,103 1443,90 1459,65 1476,110 1491,190 1507,224 1522,220 1538,198 1554,195
C550 2,205 17,232 33,235 48,218 65,195 80,190 97,165 112,130 127,90 144,68 158,68 176,78 190,82 205,70 221,70 237,108 253,145 268,160 286,170 300,180 315,198 333,206 347,200 365,178 379,148 394,135 411,100 426,75 442,55 458,58 475,70 490,120 504,170 522,218`);
const base = pts(`A550 67,222 100,237 125,243 150,236 174,236 190,245 205,260 220,268 235,270 250,266 267,258 283,260 314,263 330,257 345,248 376,241 410,244 430,243 445,225 460,203 474,182 495,176 505,177 519,195 534,225 550,252 567,268 583,272 600,266 620,250 640,243 660,245 692,260 715,258 741,262 773,265 803,262 820,256 835,235 852,205 866,190 881,184 905,187 930,195 945,193 975,172 995,164 1010,170 1030,188 1055,195 1075,190 1102,184 1125,192 1150,203 1170,190 1215,187 1235,205 1255,230 1275,235 1300,222 1340,214 1385,205 1410,208 1430,202 1450,190 1475,195 1498,212 1520,222 1545,240
B550 5,259 40,253 72,243 100,215 120,206 150,213 170,207 185,197 210,195 235,202 260,205 276,213 292,215 308,190 323,158 345,130 370,106 390,110 405,130 420,145 440,140 460,128 481,122 497,103 529,83 550,62 576,52 595,60 610,85 625,103 640,110 655,103 670,97 687,100 703,105 725,95 748,78 770,95 800,110 828,108 850,85 876,55 900,55 955,70 980,65 1020,72 1048,60 1080,52 1097,80 1112,120 1130,147 1145,135 1165,115 1190,113 1240,118 1270,120 1290,130 1318,145 1340,138 1360,115 1380,97 1405,100 1427,103 1443,92 1459,92 1476,108 1491,128 1507,134 1530,130
C550 2,132 30,148 80,162 100,155 125,135 158,128 180,128 205,105 230,94 260,105 290,108 315,128 333,137 365,130 379,122 420,115 450,102 475,95 500,108 522,122`);
// simple moving average of a curve over the last `n` pixels
function lag(ps, n) {
  const out = [];
  for (let x = 22; x <= END; x += 3) {
    let s = 0;
    for (let k = 0; k <= 4; k++) s += valueAt(ps, Math.max(22, x - n * k / 4));
    out.push([x, s / 5]);
  }
  return out;
}
const baseLag = lag(base, 24), fastLag = lag(fast, 5);
const dense = (ps, step) => { const o = []; for (let x = 23; x <= END; x += step) o.push([x, valueAt(ps, x)]); return o; };
const L = y => 550 + y / 3;
const beyond = (ps, limit, sign, a, b, fill) => area([[a, limit], ...dense(ps, 2).filter(p => p[0] >= a && p[0] <= b).map(p => [p[0], sign > 0 ? Math.max(limit, p[1]) : Math.min(limit, p[1])]), [b, limit]], fill);
mount('trains', 555, 647, grid(555, 647, [579, 595, 611, 627])
  + rect(22, L(40), END, L(88), '#d9f5d5') + rect(22, L(230), END, L(277), '#fddcd9')
  + area([...dense(base, 3), ...baseLag.slice().reverse()], 'rgba(120,110,210,.4)')
  + area([...dense(fast, 3), ...fastLag.slice().reverse()], 'rgba(120,220,120,.3)')
  + beyond(base, L(230), 1, A(67), A(830), 'rgba(190,100,70,.65)') + beyond(base, L(88), -1, B(500), B(640), 'rgba(80,160,90,.6)') + beyond(base, L(88), -1, B(840), B(1110), 'rgba(80,160,90,.6)')
  + [40, 88, 230, 277].map(y => hline(22, END, L(y), '#222')).join('') + hline(22, END, L(157), '#1010b0', 1.300, '4 3')
  + path(baseLag, '#111', 2, 'stroke-dasharray="5 4"') + runs(base, (a, b) => b[1] < a[1] ? '#00009c' : '#ff0a0a', 2.800, 'stroke-linecap="round"')
  + path(fastLag, '#2a4a2a', .8, 'stroke-dasharray="2 2"') + runs(fast, (a, b) => b[1] <= a[1] ? '#111' : '#e01818', 1.300)
  + tris('A550 125,136 172,127 283,196 314,186 376,84 487,67 677,190 741,222 881,64 1119,157 1230,150 1402,104 1466,95 1545,225 B550 134,72 198,150 260,183 370,57 592,62 687,157 766,115 828,214 890,70 1017,100 1097,76 1191,152 1270,96 1395,57 1478,97 1554,195 C550 158,68 221,69 458,60', 4, true, '#b40000')
  + tris('A550 110,134 157,132 235,250 298,192 330,172 441,190 598,264 725,229 788,250 1055,228 1166,199 1276,233 1418,117 1512,224 B550 24,241 181,150 245,189 290,200 465,200 655,167 718,170 812,224 843,198 970,110 1035,98 1144,180 1222,147 1333,199 1443,98 1522,221 C550 33,235 190,80 347,202', 4, false, '#0000b4'));
axis('trains', 555, 647, [[L(40), '100', '', 1], [L(102), '74,868', '', 1], [L(76), '80', '', 1], [L(123), '65,157', '#e81c1c', 1], [L(158), '50', '#2020b8', 1], [L(220), '24,356', '#e04040', 1], [L(192), '35.880', '', 1], [L(238), '20', '', 1], [L(272), '0', '', 1]]);

/* ---------- willy ---------- */
const TINT = { p: '#ffa3a3', l: '#bfbffb', g: '#60c460', r: '#c46060' };
const stripes = (text, y0, y1, tint) => { let org = A; return text.trim().split(/\s+/).map(t => {
  if (t === 'A' || t === 'B' || t === 'C') { org = { A, B, C }[t]; return ''; }
  const [c, a, b] = t.split(',');
  return rect(org(+a), y0, org(+b), y1, tint[c]);
}).join(''); };
const willy = pts(`A550 67,433 95,425 125,427 141,418 157,400 174,430 190,445 205,462 225,462 250,445 267,436 283,458 298,452 320,450 330,440 345,412 361,403 376,418 394,432 425,434 441,380 456,345 474,328 487,345 503,352 519,410 534,430 550,460 560,467 583,466 598,450 613,442 630,428 645,430 662,445 679,470 692,450 709,443 724,452 741,455 757,467 773,456 803,455 820,447 835,392 852,385 866,383 881,380 898,392 914,406 945,405 963,395 985,388 1000,400 1023,415 1040,415 1087,411 1102,396 1120,432 1134,425 1150,385 1166,388 1182,380 1197,358 1210,375 1230,402 1245,420 1260,427 1276,402 1291,420 1308,410 1323,402 1340,392 1370,392 1387,395 1402,392 1418,385 1434,378 1450,380 1466,430 1480,436 1500,422 1513,444 1529,455 1545,458
B550 5,460 24,430 40,445 56,425 72,420 95,385 120,380 135,420 150,412 165,395 181,390 198,405 230,408 245,385 262,432 276,430 292,370 308,352 323,328 355,316 370,340 386,378 402,375 418,380 433,370 449,362 465,348 481,362 497,330 530,340 545,312 576,320 592,320 608,350 624,372 639,348 655,340 670,360 687,355 703,358 718,338 734,340 748,330 766,362 797,364 812,350 828,370 843,335 859,313 890,322 907,323 954,346 970,316 1002,346 1020,327 1048,325 1064,312 1080,318 1095,385 1112,388 1130,378 1144,362 1176,360 1191,374 1222,362 1238,372 1254,360 1270,362 1287,385 1303,392 1333,378 1348,356 1365,356 1380,348 1411,370 1427,338 1459,338 1476,380 1500,380 1522,386 1538,368 1554,385
C550 2,395 33,400 50,418 65,408 80,420 97,408 112,395 144,392 160,376 176,378 190,362 205,318 221,335 237,352 253,362 268,342 286,360 300,390 315,392 333,390 347,380 365,378 379,362 394,370 411,366 426,345 458,340 475,334 490,362 504,370 522,374`);
mount('willy', 647, 710, grid(647, 710, [])
  + stripes('A p,101,132 p,165,228 p,277,291 p,368,403 p,417,432 g,432,450 l,450,481 r,512,528 p,528,559 p,576,591 p,637,683 p,716,764 p,780,826 g,844,859 l,874,889 r,905,921 g,969,984 r,984,1000 p,1000,1032 p,1112,1127 g,1143,1159 l,1174,1206 r,1222,1238 p,1238,1267 p,1284,1299 p,1334,1349 g,1349,1361 l,1361,1380 r,1380,1394 g,1412,1427 l,1427,1441 r,1458,1474 p,1474,1489 p,1505,1540 p,1552,1568 B p,32,48 g,94,110 r,126,141 g,174,190 r,190,206 p,206,238 g,238,250 r,250,268 p,268,285 g,285,300 l,300,361 l,394,410 l,426,474 l,490,505 l,536,550 l,583,600 l,630,664 l,680,694 l,712,726 l,741,756 l,789,818 l,836,882 l,900,917 l,963,978 l,1008,1073 r,1088,1105 p,1105,1119 g,1119,1135 l,1135,1167 l,1198,1230 l,1247,1261 r,1293,1307 g,1307,1325 l,1325,1386 l,1419,1452 l,1498,1512 l,1530,1545 r,1562,1568 C r,0,8 p,8,56 p,72,87 g,118,135 r,135,153 g,153,166 l,182,212 l,261,276 r,293,307 g,307,325 r,325,341 g,341,355 l,355,385 l,402,483', 647, 710, TINT)
  + beyond(willy, L(431), 1, 22, END, 'rgba(130,20,20,.5)') + beyond(willy, L(348), -1, 22, END, 'rgba(60,160,60,.45)')
  + hline(22, END, L(308), '#222', 1, '3 3') + hline(22, END, L(473), '#222', 1, '3 3')
  + hline(22, END, L(348), '#0808a0', 1.800) + hline(22, END, L(391), '#0808b0', 1.500, '4 3') + hline(22, END, L(431), '#c00c0c', 1.800)
  + runs(dense(willy, 1.500), (a, b) => a[1] > L(433) ? '#8c0000' : a[1] < L(347) ? '#00c800' : b[1] <= a[1] ? '#0000c0' : '#ff9600', 2.500, 'stroke-linecap="round"')
  + tris('A550 425,391 837,391 965,391 1135,391 1341,391 1402,391 B550 92,391 170,391 232,391 280,391 1112,391 1303,391 C550 115,391 148,391 302,391 335,391', 5, false, '#0000b4')
  + tris('A550 503,388 898,388 979,388 1213,388 1370,388 1450,388 B550 120,388 181,388 245,388 1080,388 1287,388 1554,388 C550 127,388 288,388 316,388', 5, true, '#b40000'));
axis('willy', 647, 710, [[L(308), '0', '', 1], [L(343), '-25', '#2020b8', 1], [L(374), '-40,633', '#f0a020', 1], [L(399), '-50', '#2020b8', 1], [L(431), '-75', '#c81818', 1], [L(463), '-100', '', 1]]);

/* ---------- awesome ---------- */
const ao = pts(`A550 67,640 125,638 174,637 200,645 220,655 267,654 300,650 345,643 395,641 430,640 460,634 490,631 515,634 550,650 575,658 610,654 660,650 690,662 755,665 800,665 835,652 866,637 890,633 915,635 945,638 990,636 1040,644 1087,645 1140,652 1200,646 1240,650 1300,650 1370,642 1402,642 1445,638 1482,644 1520,650 B550 0,656 30,658 70,648 118,641 160,646 200,643 260,645 292,643 323,635 370,628 400,636 465,640 545,634 590,618 625,624 660,636 700,638 770,643 828,648 860,640 910,628 960,634 987,620 1017,605 1048,590 1064,570 1080,518 1095,502 1112,545 1130,560 1150,540 1176,543 1191,560 1206,570 1222,573 1240,580 1254,592 1272,596 1287,615 1303,645 1330,655 1348,635 1365,612 1387,605 1411,624 1427,620 1443,598 1457,595 1476,625 1491,655 1507,667 1530,666 1554,658 C550 2,672 33,685 66,694 97,680 112,658 130,636 160,634 190,625 205,605 221,585 237,592 253,605 286,608 300,632 320,650 347,658 365,652 400,640 442,625 475,623 490,628 504,640 525,648`);
const aoSlow = pts(`A550 67,648 141,647 180,645 220,651 267,652 298,651 345,648 395,643 440,648 515,640 550,645 600,655 660,654 700,658 757,664 800,666 835,667 870,655 914,645 990,641 1040,645 1102,648 1150,648 1210,645 1291,652 1370,650 1440,647 1482,645 B550 0,653 56,658 102,650 160,646 230,646 276,648 350,640 400,633 465,637 545,635 592,630 640,628 740,630 790,632 860,638 907,628 950,630 987,628 1048,597 1064,590 1080,565 1097,545 1115,535 1140,530 1160,543 1185,540 1210,533 1240,540 1285,555 1316,580 1348,595 1380,588 1400,581 1459,580 1491,597 1522,630 1554,650 C550 2,650 33,662 80,682 112,680 150,665 190,648 221,625 268,615 286,618 315,642 360,652 394,640 426,627 475,614 495,614 525,621`);
let bars = '';
for (let x = A(560); x < END; x += 2.680) {
  const y = valueAt(ao, x), s = valueAt(aoSlow, x), up = valueAt(ao, x + 2) < valueAt(ao, x - 2), z = L(643);
  if (s < y) bars += rect(x - 1, s, x + .6, Math.min(y, z), up ? '#e4f5e0' : '#fcc9c9');
  if (Math.abs(y - z) > .5) bars += rect(x - .9, Math.min(y, z), x + .9, Math.max(y, z), y < z ? (up ? '#0c0cf0' : '#f000f0') : (up ? '#009c9c' : '#f01010'));
}
mount('awesome', 710, 785, grid(710, 785, [731, 748, 782]) + bars + hline(22, END, L(643), '#1010e8', 1.500)
  + runs(ao, (a, b) => b[1] <= a[1] ? '#0a0630' : '#b010b0', 2.500, 'stroke-linecap="round"') + runs(aoSlow, (a, b) => b[1] <= a[1] ? '#60f060' : '#ff9200', 2.800, 'stroke-linecap="round"')
  + tris('A550 206,648 300,652 396,643 535,643 679,655 1041,648 1120,648 1230,648 1482,645 B550 402,635 624,630 909,630 1112,548 1191,552 C550 315,650 395,640', 4, true, '#f4f000')
  + tris('A550 267,651 345,646 441,648 630,656 788,665 1102,646 1213,645 1291,652 B550 56,658 560,630 860,638 987,628 1160,541 C550 114,668 380,650', 4, false, '#00f4f4'));
axis('awesome', 710, 785, [[L(495), '3.000'], [L(540), '2.000'], [L(588), '1.000'], [L(605), '441,48', '#e01818', 1], [L(622), '441,46', '#f0a020', 1], [L(645), '-82,432', '#c020c0', 1], [L(664), '-82,432', '#e01818', 1], [L(690), '-1.000']]);

/* ---------- force ---------- */
const BG = { g: '#40fb40', y: '#fffb86', d: '#640008', v: '#6a68c0', c: '#aeeffd' };
const tops = pts('A550 67,838 540,834 600,838 700,838 730,830 770,830 820,832 870,828 930,830 970,834 1100,836 1300,836 B550 0,832 60,836 230,832 300,826 400,822 500,828 650,818 760,822 850,826 940,826 975,820 1000,810 1048,800 1072,782 1088,745 1110,722 1135,714 1150,714 1180,726 1222,745 1270,756 1287,752 1320,756 1411,775 1427,768 1460,772 1476,766 1500,768 C550 0,778 30,785 60,783 144,792 190,800 237,795 268,797 320,788 400,804 470,816 530,812');
const BLUE = [[A, '70-100 141-300 500-575 680-720 800-870 1010-1120 1190-1240 1290-1420 1480-1540'], [B, '0-48 190-205 235-332 349-396 474-506 538-694 757-773 835-867 946-1150 1279-1307 1421-1436 1468-1497'], [C, '42-57 197-246 262-324 483-530']]
  .flatMap(([o, t]) => t.split(' ').map(r => r.split('-').map(v => o(+v))));
let cols = '';
for (let x = A(77); x < C(530); x += 5.352) {
  const blue = BLUE.some(([a, b]) => x >= a && x <= b);
  cols += rect(x - 2.500, valueAt(tops, x), x + 2.500, 831, blue ? 'rgba(20,20,205,.85)' : 'rgba(214,70,70,.8)', `stroke="${blue ? '#0c0ca0' : '#a82020'}" stroke-width=".8"`);
}
mount('force', 785, 832, rect(22, 785, B(332), 832, BG.y) + rect(B(332), 785, C(530), 832, BG.c) + stripes('A g,70,103 g,150,214 g,227,260 g,277,306 g,339,354 g,432,494 g,512,575 g,653,700 g,717,733 g,749,765 g,811,873 g,1033,1049 g,1097,1159 g,1190,1250 g,1286,1300 g,1458,1474 g,1491,1539 B g,0,48 g,129,141 g,190,222 g,238,300 d,300,317 v,317,332 v,349,396 v,474,506 y,521,538 d,538,550 v,550,694 v,757,773 v,835,867 v,946,1152 v,1279,1307 v,1421,1436 v,1468,1497 C v,42,73 v,197,246 v,262,324 v,483,530', 785, 832, BG)
  + cols + hline(22, END, L(832), '#300') + GRID.filter(x => x > 1250).map(x => `<path d="M${f(x)} 785V832" stroke="#e3e3e3" stroke-dasharray="1 3"/>`).join('') + hline(C(530), 1568, 798, '#e3e3e3', 1, '1 3') + hline(C(530), 1568, 814, '#e3e3e3', 1, '1 3'));
axis('force', 785, 832, [[L(743), '4'], [L(790), '2'], [L(804), '1,1051', '#2828d8', 1], [L(829), '0,5000', '', 1]]);

/* ---------- time scale ---------- */
document.getElementById('time').innerHTML = [
  [A, 'sept:143 07:219 11:283 16:345 21:409 26:487 oct:552 06:613 12:691 16:755 21:819 26:880 nov:976 05:1023 10:1087 16:1166 20:1229 25:1291 dic:1370 05:1434 10:1498 15:1559'],
  [B, '21:69 26:133 2026:210 09:308 14:370 19:433 25:512 feb:608 08:701 13:781 18:844 23:907 mar:987 05:1048 10:1112 15:1176 20:1254 25:1316 abr:1411 09:1504'],
  [C, '14:1 19:65 24:143 may:235 10:347 14:411 19:475 24:553 29:631 jun:677 08:789 13:867 18:946 23:1023 28:1103 jul:1150 08:1259 13:1338 18:1418'],
].flatMap(([o, t]) => t.split(' ').map(v => { const [n, x] = v.split(':'); return `<span style="left:${px(o(+x))}%">${n}</span>`; })).join('');

/* ---------- drawing tools ---------- */
const line = (a, c, w = 1) => `<path d="${a}" stroke="${c}" stroke-width="${w}" fill="none"/>`;
const plus = (x, y) => line(`M${x - 2} ${y}h4M${x} ${y - 2}v4`, '#1818f0', 1.300);
const ray = c => `<circle cx="6" cy="8" r="1.500" fill="none" stroke="${c}"/>` + line('M7 8h8', c, 1.500);
const oval = (c, fill) => `<ellipse cx="8" cy="8" rx="5.500" ry="4" transform="rotate(-10 8 8)" fill="${fill}" stroke="${c}"/>` + plus(2, 12) + plus(14, 4);
const lens = `<circle cx="7" cy="6" r="3.500" fill="#c9dbe4" stroke="#444"/>` + line('M10 9l4 4', '#222', 2);
const bell = `<path d="M3 11c2-1 2-3 2-5 0-4 6-4 6 0 0 2 0 4 2 5z" fill="#f8dc18" stroke="#a08808" stroke-width=".8"/><circle cx="8" cy="12" r="1.300" fill="#c8a808"/>`;
const txt = (x, y, t, c, s = 8) => `<text x="${x}" y="${y}" font-size="${s}" font-weight="bold" fill="${c}">${t}</text>`;
const TOOLS = [
  ['Ocultar', line('M6 9l2-2 2 2', '#333'), 'small'],
  ['Cursor', '<path d="M6 2v10l2-2 2 4 1.500-1-2-3.500h3z" fill="#e8eef2" stroke="#666" stroke-width=".8"/>', 'active'],
  ['Lupa', lens], ['Zoom de zona', '<path d="M1 4h8v9H1z" fill="none" stroke="#2b62d9" stroke-dasharray="2 1"/><g transform="translate(2 0)">' + lens + '</g>'],
  ['Alerta cursor', line('M1 3h12', '#222') + '<g transform="translate(-2 1)">' + bell + '</g>' + '<path d="M10 4v8l2-2 1 2 1-1-1-2h2z" fill="#eee" stroke="#888" stroke-width=".6"/>'],
  ['Alerta', bell + line('M2 2c-1 2-1 3 0 4M14 2c1 2 1 3 0 4', '#666')],
  ['Fibonacci', line('M0 9h4M2 2v9', '#1818f0', 1.300) + line('M2 3l4 7h5', '#222') + line('M6 6h8', '#f09060') + txt(10, 14, 'F', '#1818f0')],
  ['Fibonacci horizontal', line('M4 6h9', '#f09060') + line('M4 8h8', '#6080e0') + txt(10, 13, 'F', '#1818f0')],
  ['Rectángulo', '<path d="M3.500 4.500h9v6h-9z" fill="#a9c6e8" stroke="#5b8be8"/>' + plus(2, 11) + plus(14, 4)],
  ['Rectángulo rojo', '<path d="M3.500 4.500h9v6h-9z" fill="#c98f98" stroke="#f01818" stroke-width="1.500"/>' + plus(2, 12) + plus(14, 4)],
  ['Flecha', '<circle cx="4" cy="12" r="1.500" fill="none" stroke="#111"/>' + line('M5 11l5-5', '#111', 2) + '<path d="M7 3h6v6z" fill="#111"/>'],
  ['Texto', '<path d="M3 2h10v8l-3 3H3z" fill="#a4c5e6" stroke="#5b8be8"/>' + txt(5.500, 11, 'T', '#111')],
  ['Nota', '<circle cx="8" cy="7" r="5.500" fill="#a4c5e6" stroke="#5b8be8"/><path d="M9 12l2 3v-4" fill="#5b8be8"/>' + txt(5.500, 10, 'T', '#0a7a1a')],
  ['Segmento', '<circle cx="4" cy="12" r="1.500" fill="none" stroke="#333"/><circle cx="12" cy="5" r="1.500" fill="none" stroke="#333"/>' + line('M5 11l6-5', '#333')],
  ['Rayo verde claro', ray('#70f080')], ['Rayo verde', ray('#20a838')], ['Rayo verde oscuro', ray('#0a7020')], ['Rayo rojo', ray('#f01818')],
  ['Regla', '<path d="M2 11l9-8 3 3-9 8z" fill="#a3b5be" stroke="#56666f"/>' + line('M5 9l1 1M7 7l1 1M9 5l1 1', '#56666f')],
  ['Canal', '<path d="M1 2h14v6H1z" fill="#7cc09a"/><path d="M1 8h14v5H1z" fill="#c09aa8"/>' + line('M1 11l4-5 3 3 6-6', '#bcd0f8')],
  ['Elipse roja', oval('#e02838', '#cda0ac')], ['Elipse marrón', oval('#80603c', '#a09c98')], ['Elipse verde', oval('#1c8a30', '#90b8a8')], ['Elipse lima', oval('#30e040', '#84dca0')],
  ['Línea negra', line('M1 14L15 2', '#222')], ['Línea verde', line('M1 14L15 2', '#28a038', 1.300)], ['Línea roja', line('M1 14L15 2', '#f01818', 1.800)],
  ...[['negra', '#222'], ['salmón', '#f89080'], ['lima', '#10e818'], ['verde', '#0a7018'], ['roja', '#e81818'], ['azul', '#6a98f0'], ['marino', '#1010b0']].map(([n, c]) => ['Horizontal ' + n, line('M1 8h14', c, n === 'negra' ? 1 : 1.500)]),
  ['Vertical', line('M8 1v14', '#222')],
  ['Ángulo', line('M1 13h13M2 12L13 2M8 7c2 1 3 3 3 6', '#e07080') + line('M7 11V6M5 8l2-2 2 2', '#1818f0') + '<circle cx="13" cy="6" r="1.500" fill="none" stroke="#1818f0"/>'],
  ['Círculo', '<circle cx="8" cy="8" r="5" fill="none" stroke="#e89058"/>' + plus(8, 8) + plus(13, 3)],
  ['Ondas 1-5', line('M1 12l3-7 2 5 3-6 2 5 3-7', '#4870e0', .8) + txt(0, 8, '1', '#1818f0', 6) + txt(5, 7, '3+', '#1818f0', 6) + txt(4, 15, '+2', '#1818f0', 6) + txt(9, 12, '+4', '#1818f0', 6)],
  ['Ondas a-c', line('M2 11L7 5l4 5', '#4870e0', .8) + txt(0, 14, 'a+', '#1818f0', 6) + txt(7, 6, '+b', '#1818f0', 6) + txt(9, 15, 'c+', '#1818f0', 6)],
  ['Correcto', '<path d="M2 9l3-2 2 3 6-8 2 1-8 12z" fill="#38b848" stroke="#1c7a2c" stroke-width=".7"/>'],
  ['Pulgar', '<path d="M2 7h3v7H2zM6 7l3-5c3 0 1 3 1 4h4v7l-2 1H6z" fill="#50c860" stroke="#1c7a2c" stroke-width=".7"/>'],
  ['Eliminar', '<path d="M2 4l2-2 4 3.500L12 2l2 2-3.500 4 3.500 4-2 2-4-3.500L4 14l-2-2 3.500-4z" fill="#f01010" stroke="#8c0c0c" stroke-width=".5"/>'],
  ['Alerta parcial', '<path d="M8 7l-3 5h6z" fill="#f0a820"/>', 'small'],
  ['Más', line('M6 7l2 2 2-2', '#222'), 'fold'],
  ['Configuración', '<path d="M4 4h7l3 4v6H4z" fill="#e8eef0" stroke="#777"/><circle cx="4" cy="4" r="3" fill="#0a8a1a"/>' + txt(2.500, 6, '1', '#fff', 5) + line('M5 11l3-3 2 3', '#d33') + line('M9 10l4 4', '#222', 2), 'tall'],
  ['Opciones', line('M2 6h2M6 6h2M10 6h2', '#222', 2) + '<circle cx="11" cy="11" r="2.500" fill="#222"/><path d="M9.500 10.500h3L11 12z" fill="#fff"/>', 'tall'],
];
document.getElementById('tools').innerHTML = TOOLS.map(([n, s, c]) => `<button class="${c || ''}" aria-label="${n}"><svg width="16" height="16" viewBox="0 0 16 16">${s}</svg></button>`).join('');
```
